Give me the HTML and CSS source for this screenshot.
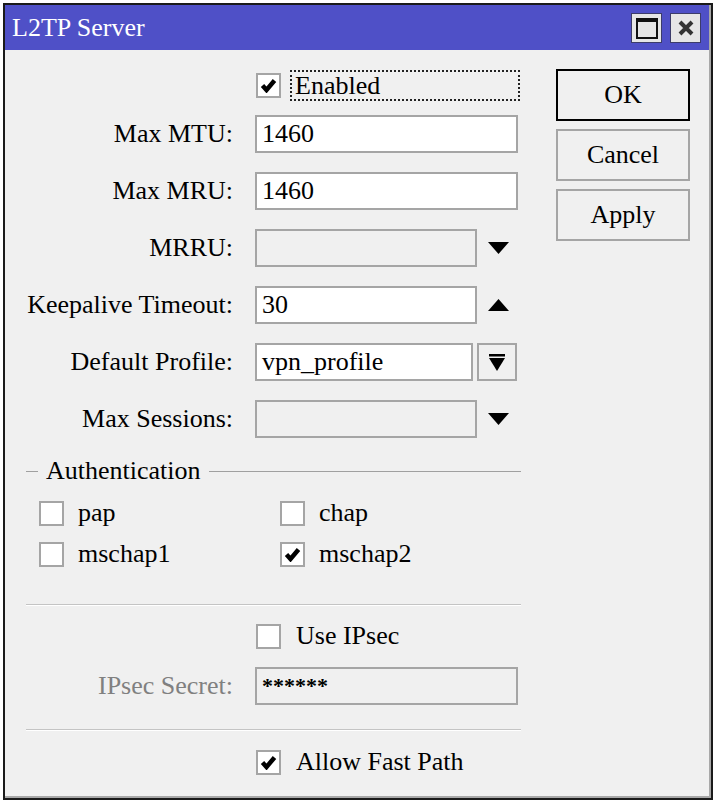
FILE: index.html
```html
<!DOCTYPE html>
<html lang="en">
<head>
    <meta charset="UTF-8">
    <title>L2TP Server</title>
    <link rel="stylesheet" href="styles.css">
</head>
<body class="page">
    <div class="window">
        <div class="frame">
            <div class="titlebar">
                <p class="title">L2TP Server</p>
                <div class="win-btns">
                    <span class="win-btn"><span class="max-icon"></span></span>
                    <span class="win-btn">
                        <svg width="16" height="16" viewBox="0 0 16 16"><path d="M2 2 L14 14 M14 2 L2 14" stroke="#333" stroke-width="4"/></svg>
                    </span>
                </div>
            </div>

            <div class="content">
                <div class="form">
                    <div class="enabled-row">
                        <span class="checkbox checked">
                            <svg width="17" height="15" viewBox="0 0 17 15"><path d="M2.5 7.5 L6.5 12 L14.5 2.5" fill="none" stroke="#000" stroke-width="4.5"/></svg>
                        </span>
                        <p class="focus-label">Enabled</p>
                    </div>

                    <div class="fields">
                        <p class="lbl">Max MTU:</p>
                        <div class="field"><p class="input">1460</p></div>

                        <p class="lbl">Max MRU:</p>
                        <div class="field"><p class="input">1460</p></div>

                        <p class="lbl">MRRU:</p>
                        <div class="field">
                            <p class="input short disabled"></p>
                            <svg class="arrow" width="21" height="12" viewBox="0 0 21 12"><polygon points="0,0 21,0 10.5,12"/></svg>
                        </div>

                        <p class="lbl">Keepalive Timeout:</p>
                        <div class="field">
                            <p class="input short">30</p>
                            <svg class="arrow" width="21" height="12" viewBox="0 0 21 12"><polygon points="0,12 21,12 10.5,0"/></svg>
                        </div>

                        <p class="lbl">Default Profile:</p>
                        <div class="field">
                            <p class="input select">vpn_profile</p>
                            <span class="drop-btn">
                                <svg width="16" height="17" viewBox="0 0 16 17"><rect x="0" y="0" width="16" height="2.5"/><polygon points="0,4 16,4 8,17"/></svg>
                            </span>
                        </div>

                        <p class="lbl">Max Sessions:</p>
                        <div class="field">
                            <p class="input short disabled"></p>
                            <svg class="arrow" width="21" height="12" viewBox="0 0 21 12"><polygon points="0,0 21,0 10.5,12"/></svg>
                        </div>
                    </div>

                    <div class="group">
                        <div class="legend"><span class="legend-dash"></span><p class="legend-text">Authentication</p><span class="legend-line"></span></div>
                        <div class="auth-grid">
                            <div class="check-item"><span class="checkbox"></span><p class="txt">pap</p></div>
                            <div class="check-item"><span class="checkbox"></span><p class="txt">chap</p></div>
                            <div class="check-item"><span class="checkbox"></span><p class="txt">mschap1</p></div>
                            <div class="check-item">
                                <span class="checkbox checked">
                                    <svg width="17" height="15" viewBox="0 0 17 15"><path d="M2.5 7.5 L6.5 12 L14.5 2.5" fill="none" stroke="#000" stroke-width="4.5"/></svg>
                                </span><p class="txt">mschap2</p>
                            </div>
                        </div>
                        <div class="separator"></div>
                    </div>

                    <div class="check-line ipsec-line"><span class="checkbox"></span><p class="txt">Use IPsec</p></div>

                    <div class="fields secret-row">
                        <p class="lbl dim">IPsec Secret:</p>
                        <div class="field"><p class="input disabled secret">******</p></div>
                    </div>

                    <div class="group">
                        <div class="separator second"></div>
                    </div>

                    <div class="check-line fastpath-line">
                        <span class="checkbox checked">
                            <svg width="17" height="15" viewBox="0 0 17 15"><path d="M2.5 7.5 L6.5 12 L14.5 2.5" fill="none" stroke="#000" stroke-width="4.5"/></svg>
                        </span><p class="txt">Allow Fast Path</p>
                    </div>
                </div>

                <div class="buttons">
                    <p class="button default">OK</p>
                    <p class="button">Cancel</p>
                    <p class="button">Apply</p>
                </div>
            </div>
        </div>
    </div>
</body>
</html>
```

FILE: styles.css
```css
* {
    box-sizing: border-box;
}
.page {
    margin: 0;
    padding: 3px;
    background-color: #fff;
}
p {
    margin: 0;
}
.window .title,
.window .focus-label,
.window .lbl,
.window .input,
.window .legend-text,
.window .txt,
.window .button {
    font-family: "Liberation Serif", "Times New Roman", serif !important;
    font-size: 26px;
}
.window {
    width: 710px;
    height: 797px;
    border: 2px solid #1a1a1a;
    background-color: #f0f0f0;
    color: #000;
    font-family: "Liberation Serif", "Times New Roman", serif !important;
}
.frame {
    height: 100%;
    border-right: 2px solid #a8a8a8;
    border-bottom: 2px solid #a8a8a8;
}
.titlebar {
    height: 45px;
    background-color: #4f50c7;
    display: flex;
    align-items: center;
    justify-content: space-between;
    padding: 0 8px 0 7px;
}
.window .title {
    color: #fff;
    line-height: 1;
}
.win-btns {
    display: flex;
    gap: 8px;
    margin-top: 1px;
}
.win-btn {
    width: 31px;
    height: 30px;
    background-color: #e6e6e6;
    border: 1px solid #3c3c6a;
    display: flex;
    align-items: center;
    justify-content: center;
}
.max-icon {
    width: 22px;
    height: 21px;
    border: 2px solid #111;
    border-top-width: 4px;
}

/* main area */
.content {
    display: flex;
    padding-top: 20px;
}
.form {
    width: 521px;
}
.buttons {
    margin-left: 30px;
    width: 134px;
    display: flex;
    flex-direction: column;
    gap: 8px;
}
.button {
    height: 52px;
    border: 2px solid #a5a5a5;
    background-color: #f0f0f0;
    display: flex;
    align-items: center;
    justify-content: center;
}
.button.default {
    border-color: #000;
    margin-top: -1px;
}

/* form rows */
.enabled-row {
    display: flex;
    align-items: center;
    height: 31px;
    margin-left: 251px;
    margin-bottom: 14px;
}
.enabled-row .checkbox {
    margin-right: 9px;
}
.focus-label {
    width: 230px;
    height: 31px;
    border: 2px dotted #222;
    padding-left: 3px;
    display: flex;
    align-items: center;
}
.fields {
    display: grid;
    grid-template-columns: 228px 263px;
    grid-auto-rows: 38px;
    column-gap: 22px;
    row-gap: 19px;
}
.lbl {
    display: flex;
    align-items: center;
    justify-content: flex-end;
}
.window .lbl.dim {
    color: #808080;
}
.field {
    display: flex;
    align-items: center;
}
.input {
    width: 263px;
    height: 38px;
    border: 2px solid #a5a5a5;
    background-color: #fff;
    padding-left: 5px;
    display: flex;
    align-items: center;
}
.input.short {
    width: 222px;
}
.input.select {
    width: 218px;
}
.input.disabled {
    background-color: #f0f0f0;
}
.window .input.secret {
    font-size: 22px;
    font-weight: bold;
}
.arrow {
    margin-left: 11px;
}
.drop-btn {
    width: 40px;
    height: 38px;
    margin-left: 4px;
    border: 2px solid #a5a5a5;
    display: flex;
    align-items: center;
    justify-content: center;
}

/* checkboxes */
.checkbox {
    width: 25px;
    height: 25px;
    border: 2px solid #a5a5a5;
    background-color: #fff;
    display: inline-flex;
    align-items: center;
    justify-content: center;
    flex-shrink: 0;
}

/* authentication group */
.group {
    margin-left: 21px;
    width: 495px;
}
.legend {
    display: flex;
    align-items: center;
    height: 30px;
    margin-top: 18px;
}
.legend-dash {
    width: 12px;
    border-top: 1px solid #a0a0a0;
}
.legend-text {
    padding: 0 8px;
}
.legend-line {
    flex: 1;
    border-top: 1px solid #a0a0a0;
}
.auth-grid {
    display: grid;
    grid-template-columns: 241px 241px;
    grid-auto-rows: 26px;
    row-gap: 15px;
    padding-left: 13px;
    margin-top: 14px;
}
.check-item {
    display: flex;
    align-items: center;
    gap: 14px;
}
.separator {
    border-top: 1px solid #c4c4c4;
    border-bottom: 1px solid #fff;
    margin-top: 37px;
}
.separator.second {
    margin-top: 24px;
}
.check-line {
    display: flex;
    align-items: center;
    gap: 15px;
    height: 26px;
    margin-left: 251px;
}
.ipsec-line {
    margin-top: 17px;
}
.secret-row {
    margin-top: 18px;
}
.fastpath-line {
    margin-top: 18px;
}
```
